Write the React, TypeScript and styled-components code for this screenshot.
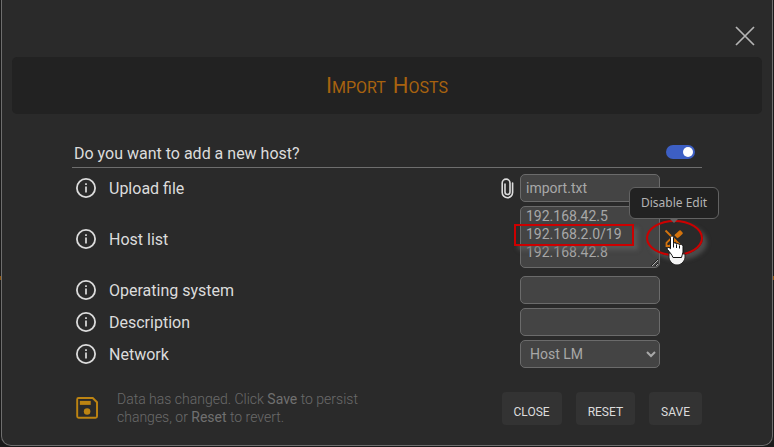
import React, { useId, useState } from "react";
import styled, { createGlobalStyle } from "styled-components";

const GlobalStyle = createGlobalStyle`
  * { box-sizing: border-box; }
  body {
    margin: 0;
    background: #1a1a1a;
    color: #dcdcdc;
    font-family: Roboto, "Liberation Sans", sans-serif;
    font-size: 16px;
  }
`;

const Page = styled.main`
  min-height: 100vh;
  display: flex;
  padding: 0 1px 1px;
  background: linear-gradient(#8a520c, #8a520c) 0 276px / 100% 4px no-repeat;
`;

const Dialog = styled.section`
  flex: 1;
  padding: 26px 10px 18px;
  background: #2a2a2a;
  border: 1px solid #6e6e6e;
  border-top-width: 0;
  border-radius: 0 0 10px 10px;
`;

const TopBar = styled.div`
  display: flex;
  justify-content: flex-end;
  padding-right: 7px;
  margin-bottom: 11px;
`;

const IconButton = styled.button`
  display: flex;
  padding: 0;
  border: 0;
  background: none;
  color: inherit;
  cursor: pointer;
`;

const Header = styled.header`
  display: flex;
  align-items: center;
  justify-content: center;
  height: 57px;
  border-radius: 5px;
  background: #222222;
`;

const Title = styled.h1`
  display: flex;
  gap: 7px;
  margin: 0;
  color: #a8620f;
  font-size: 16px;
  font-weight: 400;
  text-transform: uppercase;
`;

const TitleWord = styled.span`
  display: block;
  &::first-letter { font-size: 22px; }
`;

const Form = styled.form`
  padding: 26px 60px 0;
`;

const Question = styled.div`
  display: flex;
  align-items: center;
  justify-content: space-between;
  height: 28px;
  padding: 0 7px 4px 2px;
  margin-bottom: 6px;
  border-bottom: 1px solid #6e6e6e;
`;

const QuestionLabel = styled.label`
  padding-top: 4px;
`;

const Switch = styled.input`
  appearance: none;
  display: flex;
  align-items: center;
  width: 29px;
  height: 14px;
  margin: 0;
  padding: 0 2px;
  border-radius: 7px;
  background: #3d5fc4;
  cursor: pointer;
  &::before {
    content: "";
    width: 10px;
    height: 10px;
    border-radius: 50%;
    background: #ffffff;
  }
  &:checked { justify-content: flex-end; }
`;

const Rows = styled.div`
  display: flex;
  flex-direction: column;
  gap: 4px;
`;

const Row = styled.div<{ $tall?: boolean }>`
  display: flex;
  align-items: center;
  min-height: ${(p) => (p.$tall ? "66px" : "28px")};
  padding-left: 2px;
`;

const RowLabel = styled.label`
  flex: 1;
  padding-left: 11px;
`;

const Field = styled.div`
  position: relative;
  align-self: flex-start;
  width: 140px;
  margin-left: 6px;
`;

const Trailing = styled.div`
  position: relative;
  width: 42px;
  display: flex;
  padding-left: 4px;
`;

const control = `
  display: block;
  width: 100%;
  margin: 0;
  border: 1px solid #6b6b6b;
  border-radius: 5px;
  outline: none;
  background: #444444;
  color: #a8a8a8;
  font-family: Roboto, "Liberation Sans", sans-serif;
  font-size: 14px;
`;

const TextInput = styled.input`
  ${control}
  height: 28px;
  padding: 0 5px;
`;

const TextArea = styled.textarea`
  ${control}
  height: 62px;
  padding: 0 5px;
  line-height: 18px;
  overflow: hidden;
  resize: both;
`;

const Select = styled.select`
  ${control}
  height: 28px;
  padding: 0 5px;
`;

const Highlight = styled.div`
  position: absolute;
  top: 18px;
  left: -6px;
  width: 120px;
  height: 22px;
  border: 2px solid #cc0000;
  box-shadow: 4px 4px 4px rgba(100, 100, 100, 0.6);
  pointer-events: none;
`;

const Ring = styled.div`
  position: absolute;
  top: -9px;
  left: -14px;
  width: 57px;
  height: 36px;
  border: 2px solid #cc0000;
  border-radius: 50%;
  box-shadow: 4px 4px 4px rgba(100, 100, 100, 0.6);
  pointer-events: none;
`;

const Pointer = styled.svg`
  position: absolute;
  top: 6px;
  left: 6px;
  pointer-events: none;
`;

const Tooltip = styled.div`
  position: absolute;
  z-index: 1;
  bottom: 30px;
  left: -31px;
  padding: 6px 11px;
  border: 1px solid #626262;
  border-radius: 6px;
  background: #222222;
  color: #b4b4b4;
  font-family: "Noto Sans", sans-serif;
  font-size: 12px;
  line-height: 18px;
  white-space: nowrap;
  &::after {
    content: "";
    position: absolute;
    top: 100%;
    left: 50%;
    margin-left: -5px;
    border: 5px solid transparent;
    border-top-color: #626262;
  }
`;

const Footer = styled.footer`
  display: flex;
  align-items: center;
  margin-top: 22px;
`;

const Notice = styled.p`
  flex: 1;
  margin: 0 0 0 16px;
  color: #6a6a6a;
  font-size: 14px;
  font-weight: 300;
  line-height: 18px;
`;

const NoticeText = styled.span`
  display: block;
  max-width: 260px;
  strong { font-weight: 400; color: #707070; }
`;

const Actions = styled.div`
  display: flex;
  gap: 14px;
`;

const Button = styled.button`
  height: 33px;
  padding: 8px 12px 0;
  border: 0;
  border-radius: 4px;
  background: #333333;
  color: #dcdcdc;
  font-family: Roboto, "Liberation Sans", sans-serif;
  font-size: 12px;
  text-transform: uppercase;
  cursor: pointer;
`;

const InfoIcon = () => (
  <svg width="24" height="24" viewBox="0 0 24 24" fill="none" stroke="#dcdcdc" aria-hidden="true">
    <circle cx="12" cy="12" r="9.1" strokeWidth="1.8" />
    <path d="M12 10.5v6M12 7.2v1.7" strokeWidth="1.7" />
  </svg>
);

const ClipIcon = () => (
  <svg width="13" height="22" viewBox="0 0 13 22" fill="none" stroke="#dcdcdc" strokeWidth="1.6" strokeLinecap="round" aria-hidden="true">
    <path d="M11.6 6v9.5a5.2 5.2 0 0 1-10.4 0V6a3.9 3.9 0 0 1 7.8 0v9a2.5 2.5 0 0 1-5 0V7" />
  </svg>
);

const SaveIcon = () => (
  <svg width="29" height="29" viewBox="-0.5 0.5 24 24" fill="#bd8412" aria-hidden="true">
    <path d="M17 3H5a2 2 0 0 0-2 2v14a2 2 0 0 0 2 2h14a2 2 0 0 0 2-2V7zM19.4 19.4H4.6V4.6h11.7L19.4 7.7z" fillRule="evenodd" />
    <path d="M6 6.2h9v3.3H6z" />
    <circle cx="12" cy="15" r="2.7" />
  </svg>
);

const CloseIcon = () => (
  <svg width="20" height="20" viewBox="0 0 20 20" stroke="#b4b4b4" strokeWidth="1.7" aria-hidden="true">
    <path d="M1 1l18 18M19 1L1 19" />
  </svg>
);

const EditOffIcon = () => (
  <svg width="20" height="20" viewBox="0 2 20 20" fill="none" stroke="#d4730d" aria-hidden="true">
    <path d="M1.500 3.500l15 15" strokeWidth="1.8" />
    <path d="M12.500 7.500l3.500-3.300 1.800 2-3.500 3.300z" strokeWidth="2" fill="#d4730d" strokeLinejoin="round" />
    <path d="M11 7.500l3 3M9 9.500L2.500 15.800V19h3l6.500-6.400" strokeWidth="1.8" />
  </svg>
);

type FormRowProps = {
  label: string;
  id: string;
  before?: React.ReactNode;
  after?: React.ReactNode;
  tall?: boolean;
  children: React.ReactNode;
};

const FormRow = ({ label, id, before, after, tall, children }: FormRowProps) => (
  <Row $tall={tall}>
    <InfoIcon />
    <RowLabel htmlFor={id}>{label}</RowLabel>
    {before}
    <Field>{children}</Field>
    <Trailing>{after}</Trailing>
  </Row>
);

export default function App() {
  const uid = useId();
  const [enabled, setEnabled] = useState(true);

  return (
    <>
      <GlobalStyle />
      <Page>
        <Dialog role="dialog" aria-labelledby={`${uid}-title`}>
          <TopBar>
            <IconButton type="button" aria-label="Close dialog">
              <CloseIcon />
            </IconButton>
          </TopBar>
          <Header>
            <Title id={`${uid}-title`}>
              <TitleWord>Import</TitleWord> <TitleWord>Hosts</TitleWord>
            </Title>
          </Header>
          <Form onSubmit={(e) => e.preventDefault()}>
            <Question>
              <QuestionLabel htmlFor={`${uid}-add`}>Do you want to add a new host?</QuestionLabel>
              <Switch
                id={`${uid}-add`}
                type="checkbox"
                role="switch"
                checked={enabled}
                onChange={(e) => setEnabled(e.target.checked)}
              />
            </Question>
            <Rows>
              <FormRow
                label="Upload file"
                id={`${uid}-file`}
                before={
                  <IconButton type="button" aria-label="Attach file">
                    <ClipIcon />
                  </IconButton>
                }
              >
                <TextInput id={`${uid}-file`} defaultValue="import.txt" />
              </FormRow>
              <FormRow
                label="Host list"
                id={`${uid}-hosts`}
                tall
                after={
                  <>
                    <IconButton type="button" aria-label="Disable editing" aria-describedby={`${uid}-tip`}>
                      <EditOffIcon />
                    </IconButton>
                    <Tooltip role="tooltip" id={`${uid}-tip`}>Disable Edit</Tooltip>
                    <Ring />
                    <Pointer width="20" height="31" viewBox="0 0 20 31" aria-hidden="true">
                      <path d="M3 18v5c1 4 4 7 8 7s7-3 8-7v-4z" fill="#f4f4f4" stroke="#222222" />
                      <path
                        d="M4.5 2.5c0-2 3-2 3 0v6c.5-1 2.5-1 3 .6.7-.9 2.6-.7 3 .8.8-.8 3.5-.4 3.5 1.3v5c0 2-1 4-1.5 6.3H7c-.8-2.5-3.5-5.5-5.5-8-1-1.7 1-2.7 2.2-1.5l.8.7z"
                        fill="#ffffff"
                        stroke="#111111"
                      />
                      <path d="M7.5 8.5v4M10.5 9.5v3.5M13.5 10.5v3" stroke="#111111" />
                    </Pointer>
                  </>
                }
              >
                <TextArea
                  id={`${uid}-hosts`}
                  spellCheck={false}
                  defaultValue={"192.168.42.5\n192.168.2.0/19\n192.168.42.8"}
                />
                <Highlight />
              </FormRow>
              <FormRow label="Operating system" id={`${uid}-os`}>
                <TextInput id={`${uid}-os`} />
              </FormRow>
              <FormRow label="Description" id={`${uid}-desc`}>
                <TextInput id={`${uid}-desc`} />
              </FormRow>
              <FormRow label="Network" id={`${uid}-net`}>
                <Select id={`${uid}-net`}>
                  <option>Host LM</option>
                </Select>
              </FormRow>
            </Rows>
            <Footer>
              <SaveIcon />
              <Notice>
                <NoticeText>
                  Data has changed. Click <strong>Save</strong> to persist changes, or <strong>Reset</strong> to revert.
                </NoticeText>
              </Notice>
              <Actions>
                <Button type="button">Close</Button>
                <Button type="reset">Reset</Button>
                <Button type="submit">Save</Button>
              </Actions>
            </Footer>
          </Form>
        </Dialog>
      </Page>
    </>
  );
}
